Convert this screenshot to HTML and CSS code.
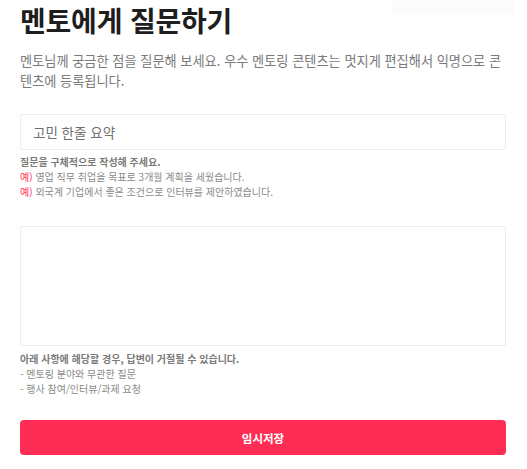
FILE: index.html
```html
<!DOCTYPE html>
<html lang="ko">
<head>
<meta charset="utf-8">
<link rel="stylesheet" href="styles.css">
</head>
<body>
<div class="ghost"></div>
<main class="page">
  <h1 class="title">멘토에게 질문하기</h1>
  <p class="intro">멘토님께 궁금한 점을 질문해 보세요. 우수 멘토링 콘텐츠는 멋지게 편집해서 익명으로 콘텐츠에 등록됩니다.</p>
  <div class="field">고민 한줄 요약</div>
  <div class="help">
    <p class="help-strong">질문을 구체적으로 작성해 주세요.</p>
    <p><span class="ex">예)</span> 영업 직무 취업을 목표로 3개월 계획을 세웠습니다.</p>
    <p><span class="ex">예)</span> 외국계 기업에서 좋은 조건으로 인터뷰를 제안하였습니다.</p>
  </div>
  <div class="area"></div>
  <div class="notice">
    <p class="help-strong">아래 사항에 해당할 경우, 답변이 거절될 수 있습니다.</p>
    <p>- 멘토링 분야와 무관한 질문</p>
    <p>- 행사 참여/인터뷰/과제 요청</p>
  </div>
  <button class="save">임시저장</button>
</main>
</body>
</html>
```

FILE: styles.css
```css
* { box-sizing: border-box; }
html, body { margin: 0; padding: 0; background: #fff; }
body {
  font-family: "Noto Sans CJK KR", "Noto Sans", sans-serif;
  color: #222;
  position: relative;
  width: 527px;
  height: 469px;
  overflow: hidden;
}
.ghost {
  position: absolute;
  left: 392px;
  top: 0;
  width: 123px;
  height: 15px;
  background: #fbfbfb;
}
.page {
  padding: 4px 21px 0 20px;
  display: flex;
  flex-direction: column;
}
.title {
  margin: 0;
  font-size: 28px;
  line-height: 32px;
  font-weight: 700;
  color: #1e1e1e;
  letter-spacing: -0.2px;
}
.intro {
  margin: 15px 0 0;
  font-size: 13.2px;
  line-height: 20px;
  color: #7a7a7a;
  word-break: break-all;
}
.field {
  margin-top: 23px;
  height: 36px;
  border: 1px solid #ededed;
  border-radius: 2px;
  padding: 0 12px;
  display: flex;
  align-items: center;
  font-size: 13.5px;
  color: #707070;
}
.help {
  margin-top: 4px;
  font-size: 10px;
  line-height: 15px;
  color: #8a8a8a;
}
.help p, .notice p { margin: 0; }
.help-strong { font-weight: 700; color: #7a7a7a; }
.ex { color: #ff2d55; }
.area {
  margin-top: 27px;
  height: 120px;
  border: 1px solid #ededed;
  border-radius: 2px;
}
.notice {
  margin-top: 5px;
  font-size: 10px;
  line-height: 15px;
  color: #8a8a8a;
}
.save {
  margin-top: 24px;
  height: 35px;
  border: 0;
  border-radius: 4px;
  background: #ff2d55;
  color: #fff;
  font-family: inherit;
  font-size: 11.5px;
  font-weight: 700;
  cursor: pointer;
}
```
